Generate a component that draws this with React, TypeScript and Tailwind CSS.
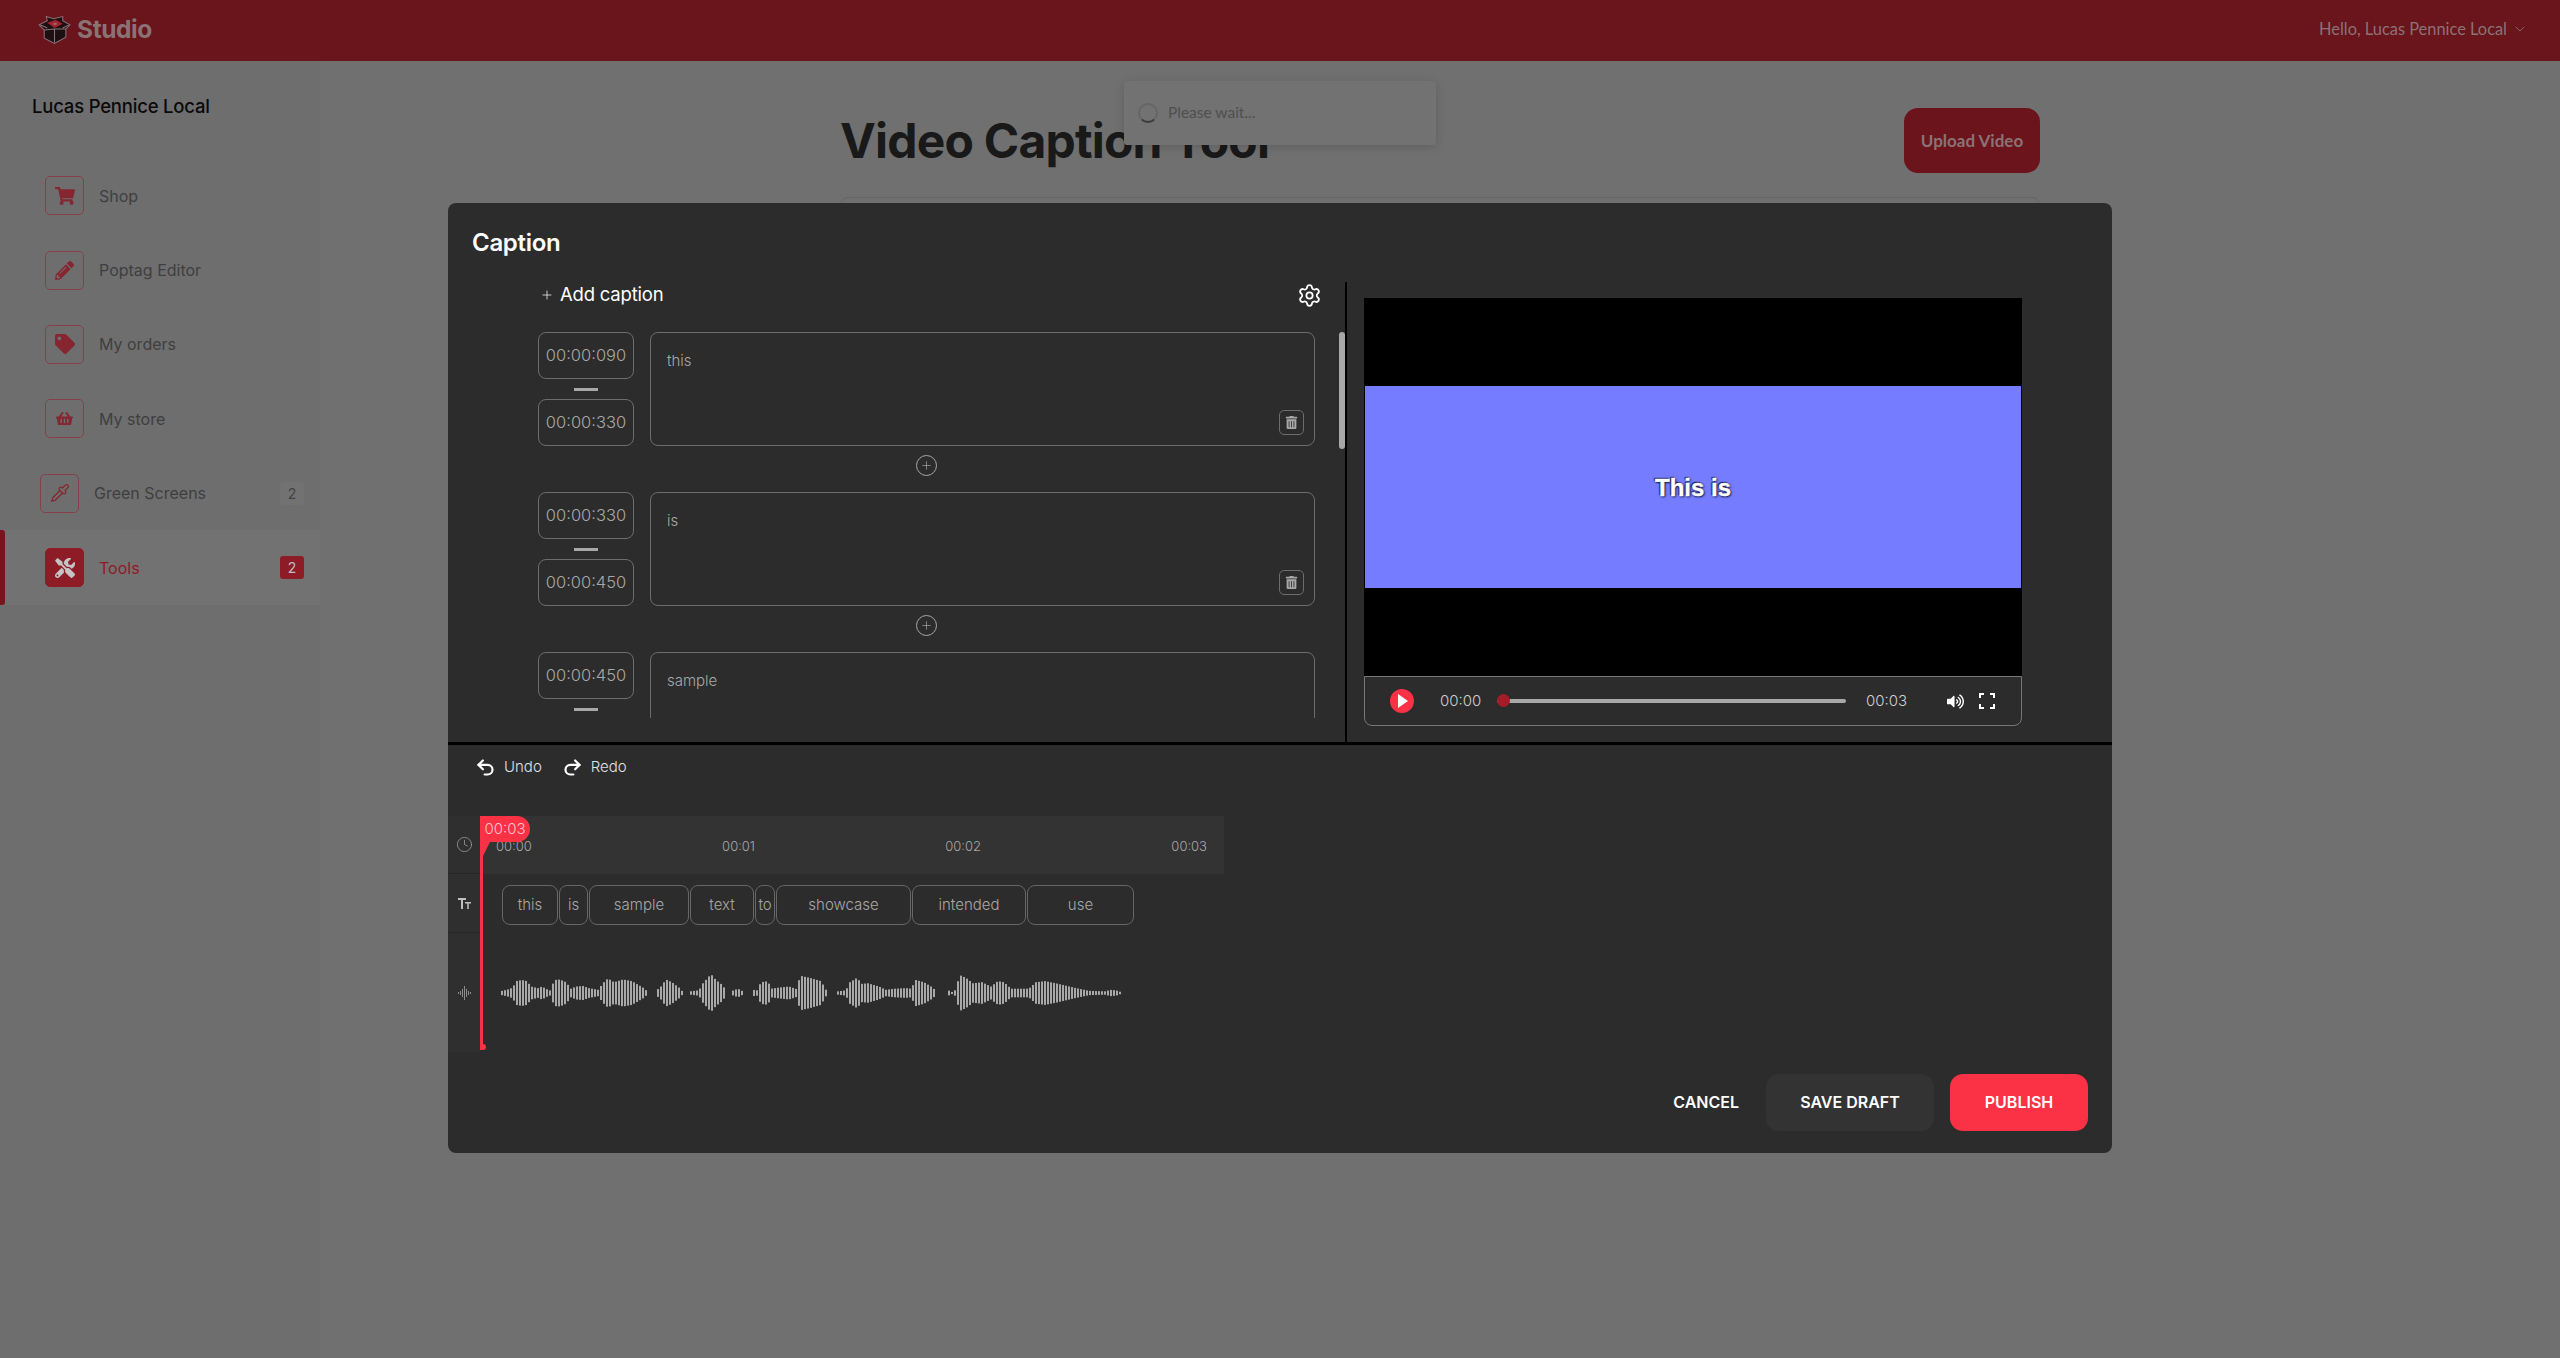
import React from 'react';
import { Clock, ChevronDown, Plus, Settings, Undo2, Redo2, Pipette } from 'lucide-react';
import { FaShoppingCart, FaPencilAlt, FaTag, FaShoppingBasket, FaTools, FaTrashAlt, FaVolumeUp } from 'react-icons/fa';

const navItems = [
  { label: 'Shop', icon: <FaShoppingCart size={20} /> },
  { label: 'Poptag Editor', icon: <FaPencilAlt size={19} /> },
  { label: 'My orders', icon: <FaTag size={20} /> },
  { label: 'My store', icon: <FaShoppingBasket size={17} /> },
  { label: 'Green Screens', icon: <Pipette size={20} strokeWidth={1.5} />, badge: '2', shifted: true },
  { label: 'Tools', icon: <FaTools size={20} />, badge: '2', active: true },
];

const captions: { from: string; to?: string; text: string }[] = [
  { from: '00:00:090', to: '00:00:330', text: 'this' },
  { from: '00:00:330', to: '00:00:450', text: 'is' },
  { from: '00:00:450', text: 'sample' },
];

const chips = [
  { text: 'this', w: 'w-[56px]' },
  { text: 'is', w: 'w-[29px]' },
  { text: 'sample', w: 'w-[100px]' },
  { text: 'text', w: 'w-[64px]' },
  { text: 'to', w: 'w-[20px]' },
  { text: 'showcase', w: 'w-[135px]' },
  { text: 'intended', w: 'w-[114px]' },
  { text: 'use', w: 'w-[107px]' },
];

// envelope of the audio clip: [x from clip start, bar height]
const waveSegments: number[][][] = [
  [[0,4],[5,6],[11,10],[14,22],[20,24],[25,22],[29,12],[36,9],[40,12],[45,7],[49,4],[52,24],[58,25],[64,20],[69,8],[74,12],[81,13],[87,9],[96,6],[102,20],[106,27],[112,20],[121,25],[130,22],[141,10],[146,2]],
  [[154,4],[159,12],[164,25],[170,20],[177,10],[181,2]],
  [[188,3],[197,5],[201,18],[209,35],[214,24],[221,14],[224,3]],
  [[229,3],[236,8],[242,2]],
  [[250,6],[255,5],[259,20],[266,22],[269,8],[277,10],[287,12],[295,7],[298,32],[308,28],[319,22],[325,3]],
  [[336,3],[344,5],[348,20],[355,28],[360,17],[366,18],[377,12],[384,6],[393,8],[404,9],[409,8],[414,24],[422,20],[429,12],[435,3]],
  [[445,6],[450,2],[453,5],[458,33],[464,28],[471,18],[480,20],[489,12],[496,22],[502,20],[509,8],[527,8],[534,20],[543,22],[554,18],[572,10],[587,4],[605,3],[607,6],[614,5],[620,1]],
];

function waveBars() {
  const bars: { x: number; h: number }[] = [];
  waveSegments.forEach((seg) => {
    for (let i = 0; i < seg.length - 1; i++) {
      const [x0, h0] = seg[i];
      const [x1, h1] = seg[i + 1];
      for (let x = Math.ceil(x0 / 3) * 3; x < x1; x += 3) {
        bars.push({ x, h: (h0 + ((h1 - h0) * (x - x0)) / (x1 - x0)) * 1.08 });
      }
    }
  });
  return bars;
}

function Logo() {
  return (
    <svg width="33" height="30" viewBox="0 0 32 28">
      <path d="M1 9 L9 5 L8 1 L15 3 L24 1 L24 5 L31 9 L27 13 L27 21 L16 27 L6 22 L6 14 Z" fill="#1c1013" stroke="#8a7275" strokeWidth="1" />
      <path d="M9 7 L17 4 L24 8 L16 12 Z" fill="#a3202c" />
      <path d="M15 7 L18 7 L18 9 L15 9 Z" fill="#8a7275" />
      <path d="M16 13 L16 26 M6 14 L16 13 L27 13 M2 9 L9 12 M30 9 L24 12" stroke="#8a7275" strokeWidth="1" fill="none" />
    </svg>
  );
}

function Sidebar() {
  return (
    <aside className="w-[320px] h-full shrink-0 bg-[#6e6e6e] pt-[31px]">
      <div className="pl-[32px] text-[18.5px] leading-[28px] font-medium text-[#0a0a0a] tracking-[-0.2px] mb-[38.5px]">Lucas Pennice Local</div>
      {navItems.map((item) => (
        <div
          key={item.label}
          className={
            'relative flex items-center h-[74.4px] pr-[16px] ' +
            (item.shifted ? 'pl-[40px] ' : 'pl-[45px] ') +
            (item.active ? 'bg-[#727272] text-[#8e1c27]' : 'text-[#3f3f3f]')
          }
        >
          {item.active && <span className="absolute left-0 top-0 bottom-0 w-[5px] bg-[#78141e] rounded-r-[3px]" />}
          <span
            className={
              'flex items-center justify-center w-[39px] h-[39px] rounded-[5px] border ' +
              (item.active ? 'bg-[#8e1c27] border-[#8e1c27] text-[#c4c4c4]' : 'border-[#87404a] text-[#862630]')
            }
          >
            {item.icon}
          </span>
          <span className="ml-[15px] flex-1 text-[16px]">{item.label}</span>
          {item.badge && (
            <span
              className={
                'flex items-center justify-center w-[24px] h-[23px] rounded-[3px] text-[14px] ' +
                (item.active ? 'bg-[#8e1c27] text-[#bdbdbd]' : 'bg-[#727272] text-[#444444]')
              }
            >
              {item.badge}
            </span>
          )}
        </div>
      ))}
    </aside>
  );
}

function CaptionRow({ from, to, text }: { from: string; to?: string; text: string }) {
  return (
    <div className="flex gap-[16px] h-[114px] shrink-0 relative">
      <div className="flex flex-col items-center w-[96px] shrink-0">
        <div className="flex items-center justify-center w-full h-[47px] shrink-0 rounded-[8px] border border-[#6d6d6d] text-[16.5px] font-light text-[#a8a8a8]">{from}</div>
        <div className="w-[24px] h-[3px] my-[8.5px] shrink-0 bg-[#a8a8a8]" />
        {to && <div className="flex items-center justify-center w-full h-[47px] shrink-0 rounded-[8px] border border-[#6d6d6d] text-[16.5px] font-light text-[#a8a8a8]">{to}</div>}
      </div>
      <div className="relative flex-1 rounded-[8px] border border-[#6d6d6d] px-[16px] pt-[18px] text-[15px] leading-[20px] font-light text-[#a8a8a8]">
        {text}
        <span className="absolute right-[10px] bottom-[10px] flex items-center justify-center w-[25px] h-[25px] rounded-[5px] border border-[#6d6d6d] text-[#a8a8a8]">
          <FaTrashAlt size={13} />
        </span>
      </div>
    </div>
  );
}

function AddBetween() {
  return (
    <div className="flex justify-center items-center h-[46px] pb-[7px] shrink-0">
      <span className="flex items-center justify-center w-[21px] h-[21px] rounded-full border border-[#a8a8a8] text-[#a8a8a8]">
        <Plus size={13} strokeWidth={1.25} />
      </span>
    </div>
  );
}

function CaptionList() {
  return (
    <div className="relative w-[899px] shrink-0 border-r-2 border-black pl-[90px] pr-[30px]">
      <div className="flex items-center justify-between h-[50px] pb-[24px]">
        <div className="flex items-center text-white">
          <Plus size={14} strokeWidth={1.25} className="ml-[2px] mr-[6px]" />
          <span className="text-[18.5px] tracking-[-0.2px]">Add caption</span>
        </div>
        <Settings size={25} strokeWidth={1.7} className="text-white mr-[-7px]" />
      </div>
      <div className="h-[386px] overflow-hidden flex flex-col">
        {captions.map((c, i) => (
          <React.Fragment key={c.from}>
            <CaptionRow {...c} />
            {i < captions.length - 1 && <AddBetween />}
          </React.Fragment>
        ))}
      </div>
      <span className="absolute top-[50px] right-0 w-[6px] h-[117px] rounded-full bg-[#a8a8a8]" />
    </div>
  );
}

function VideoPane() {
  return (
    <div className="pl-[17px] pt-[16px]">
      <div className="w-[658px]">
        <div className="flex flex-col justify-center h-[378px] bg-black px-px">
          <div className="flex items-center justify-center h-[202px] pt-[1px] bg-[#757cff] text-white text-[24px] font-bold font-['Liberation_Sans',sans-serif] [-webkit-text-stroke:0.4px_#fff] [text-shadow:0_0_2px_#10143c,1px_1px_2px_#10143c,-1px_-1px_1px_#10143c]">
            This is
          </div>
        </div>
        <div className="flex items-center h-[50px] rounded-b-[8px] border border-[#777777] pl-[25px] text-[15px] font-light text-[#d0d0d0]">
          <span className="flex items-center justify-center w-[24px] h-[24px] rounded-full bg-[#fb3146]">
            <svg width="11" height="14" viewBox="0 0 11 14"><path d="M1 0 L11 7 L1 14 Z" fill="#fff" /></svg>
          </span>
          <span className="ml-[26px] w-[42px]">00:00</span>
          <div className="relative ml-[15px] w-[349px] h-[4px] rounded-full bg-[#a8a8a8]">
            <span className="absolute left-0 top-[-5px] w-[13px] h-[13px] rounded-full bg-[#a41c28]" />
          </div>
          <span className="ml-[20px] w-[42px]">00:03</span>
          <FaVolumeUp size={17} className="ml-[39px] text-white" />
          <svg className="ml-[15px]" width="16" height="20" viewBox="0 0 16 20" fill="none" stroke="#fff" strokeWidth="2">
            <path d="M1 7 V3 H5 M11 3 H15 V7 M15 13 V17 H11 M5 17 H1 V13" />
          </svg>
        </div>
      </div>
    </div>
  );
}

function Timeline() {
  const bars = waveBars();
  return (
    <div className="relative w-[776px] h-[236px]">
      <div className="flex h-[58px]">
        <div className="flex items-center justify-center w-[33px] bg-[#2f2f2f] border-b border-[#262626] text-[#a8a8a8]">
          <Clock size={17} strokeWidth={1} />
        </div>
        <div className="flex flex-1 justify-between items-end pl-[15px] pr-[17px] pb-[19px] bg-[#333333] text-[13px] leading-[18px] font-light text-[#a8a8a8]">
          <span>00:00</span>
          <span>00:01</span>
          <span>00:02</span>
          <span>00:03</span>
        </div>
      </div>
      <div className="flex h-[59px]">
        <div className="flex items-center justify-center w-[33px] bg-[#2f2f2f] border-b border-[#262626] text-[#c0c0c0]">
          <svg width="13" height="11" viewBox="0 0 13 11" fill="currentColor">
            <rect x="0" y="0" width="8" height="2" /><rect x="3" y="0" width="2" height="11" /><rect x="7" y="4" width="6" height="1.5" /><rect x="9.25" y="4" width="1.5" height="7" />
          </svg>
        </div>
        <div className="flex gap-px pl-[21px] pt-[11px]">
          {chips.map((c) => (
            <div key={c.text} className={c.w + ' flex items-center justify-center h-[40px] rounded-[8px] border border-[#666666] text-[15px] font-light text-[#a8a8a8]'}>
              {c.text}
            </div>
          ))}
        </div>
      </div>
      <div className="flex h-[119px]">
        <div className="flex items-center justify-center w-[33px] bg-[#2f2f2f] text-[#8c8c8c]">
          <svg width="13" height="14" viewBox="0 0 13 14" fill="currentColor">
            <rect x="0" y="6" width="1" height="2" /><rect x="2" y="5" width="1" height="4" /><rect x="4" y="3" width="1" height="8" /><rect x="6" y="0" width="1" height="14" /><rect x="8" y="3" width="1" height="8" /><rect x="10" y="5" width="1" height="4" /><rect x="12" y="6" width="1" height="2" />
          </svg>
        </div>
        <div className="flex items-center pl-[20px]">
          <svg width="624" height="40" viewBox="0 0 624 40">
            {bars.map((b, i) => (
              <rect key={i} x={b.x} y={20 - b.h / 2} width="2" height={b.h} fill="#a8a8a8" />
            ))}
          </svg>
        </div>
      </div>
      {/* playhead lies over the tracks */}
      <div className="absolute left-[32px] top-0 bottom-[2px] w-[3px] bg-[#fb3146]">
        <span className="absolute left-0 top-0 flex items-center justify-center w-[50px] h-[26px] rounded-r-[13px] bg-[#fb3146] text-[15px] font-light text-[#ffc4ca]">00:03</span>
        <svg className="absolute left-0 top-[26px]" width="11" height="14" viewBox="0 0 11 14"><path d="M0 0 H10 L3 14 H0 Z" fill="#fb3146" /></svg>
        <span className="absolute left-0 bottom-0 w-[6px] h-[6px] rounded-full bg-[#fb3146]" />
      </div>
    </div>
  );
}

function CaptionModal() {
  return (
    <div className="absolute left-[448px] top-[203px] w-[1664px] h-[950px] rounded-[8px] bg-[#2c2c2c] overflow-hidden">
      <div className="h-[79px] pl-[24px] pt-[24px] text-[24px] leading-[32px] font-semibold text-white tracking-[-0.3px]">Caption</div>
      <div className="flex h-[460px]">
        <CaptionList />
        <VideoPane />
      </div>
      <div className="h-[3px] bg-black" />
      <div className="flex items-center h-[71px] pl-[27px] pb-[27px] text-[15px] font-light text-[#e2e2e2]">
        <Undo2 size={21} strokeWidth={2.5} className="text-white" />
        <span className="ml-[8px]">Undo</span>
        <Redo2 size={21} strokeWidth={2.5} className="text-white ml-[20px]" />
        <span className="ml-[8px]">Redo</span>
      </div>
      <Timeline />
      <div className="flex justify-end items-center mt-[22px] pr-[24px] text-[16px] leading-[22px] font-semibold text-white">
        <span className="mr-[27px] mb-[1px]">CANCEL</span>
        <button className="w-[168px] h-[57px] mr-[16px] pb-[1px] rounded-[13px] bg-[#333333]">SAVE DRAFT</button>
        <button className="w-[138px] h-[57px] pb-[1px] rounded-[13px] bg-[#fb3146]">PUBLISH</button>
      </div>
    </div>
  );
}

export default function App() {
  return (
    <div className="relative w-[2560px] h-[1358px] overflow-hidden bg-[#707070] font-['Inter',sans-serif]">
      <header className="flex items-center justify-between h-[61px] bg-[#6a141c] pl-[38px] pr-[32px]">
        <div className="flex items-center gap-[6px] pb-[2px]">
          <Logo />
          <span className="text-[24.5px] font-bold text-[#8a7275] tracking-[-0.4px]">Studio</span>
        </div>
        <div className="flex items-center gap-[5px] font-['Lato',sans-serif] text-[16.4px] text-[#8a7275] pb-[2px]">
          Hello, Lucas Pennice Local
          <ChevronDown size={16} strokeWidth={1.25} />
        </div>
      </header>
      <div className="flex h-[1297px]">
        <Sidebar />
        <main className="flex-1 pl-[520px]">
          <div className="w-[1200px]">
            <div className="flex items-center justify-between pt-[47px]">
              <h1 className="text-[48px] leading-[60px] font-bold text-[#191919] tracking-[-0.8px]">Video Caption Tool</h1>
              <button className="w-[136px] h-[65px] rounded-[14px] bg-[#6b141c] font-['Lato',sans-serif] text-[17px] font-bold text-[#8a7275]">Upload Video</button>
            </div>
            <div className="mt-[24px] h-[900px] rounded-[8px] border border-[#666666]" />
          </div>
        </main>
      </div>
      {/* loading toast */}
      <div className="absolute left-[1124px] top-[81px] flex items-center w-[312px] h-[64px] pl-[14px] rounded-[3px] bg-[#727272] shadow-[0_2px_10px_rgba(0,0,0,0.15)] font-['Lato',sans-serif] text-[15.5px] text-[#4f4f4f]">
        <span className="w-[20px] h-[20px] rounded-full border-2 border-[#666666] border-b-[#3a3a3a]" />
        <span className="ml-[10px]">Please wait...</span>
      </div>
      <CaptionModal />
    </div>
  );
}
